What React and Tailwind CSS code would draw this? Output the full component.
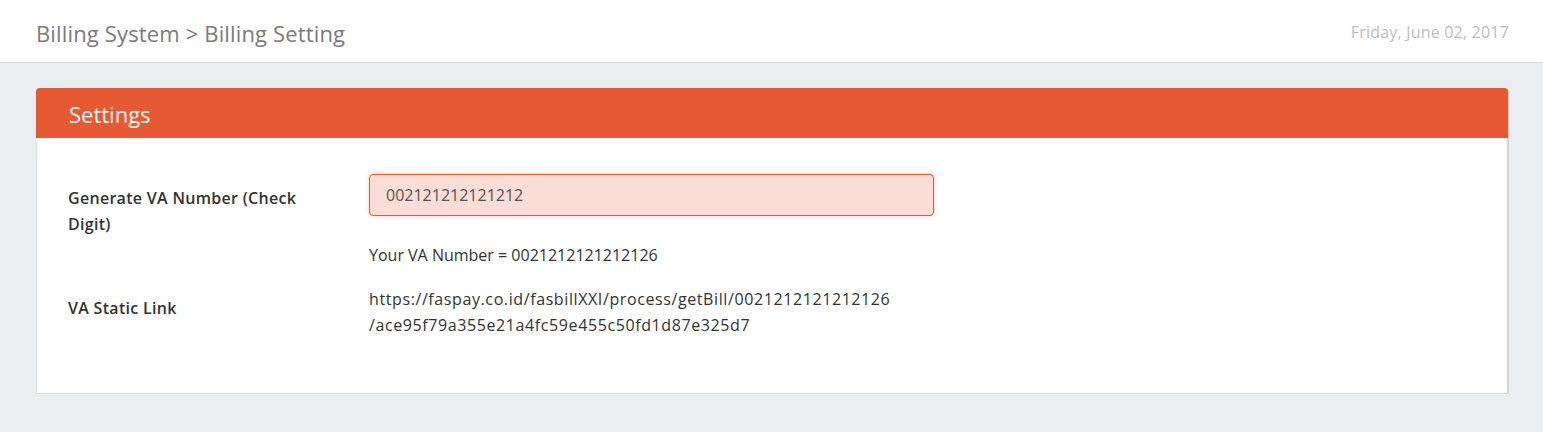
import React from "react";

function App() {
  return (
    <div className="min-h-screen bg-[#ebeef0] font-['Open_Sans',sans-serif]">
      {/* top bar */}
      <div className="h-[63px] bg-white border-b border-[#d8d8d8] flex items-center justify-between pl-[36px] pr-[34px]">
        <h1 className="text-[22px] text-[#7b7b7b] pt-[5px] tracking-[0.15px]">Billing System &gt; Billing Setting</h1>
        <span className="text-[16px] text-[#bdbdbd] tracking-[0.2px] pt-[2px]">Friday, June 02, 2017</span>
      </div>

      <div className="pl-[36px] pr-[34px] pt-[25px]">
        <div className="bg-white rounded-t-[4px] border border-[#dedede] border-r-2 border-r-[#d4d4d4]">
          <div className="h-[50px] -mx-px -mt-px bg-[#e55a32] rounded-t-[4px] flex items-center px-[33px]">
            <h2 className="text-[22px] text-white pt-[2px]">Settings</h2>
          </div>

          <div className="px-[31px] pt-[36px] pb-[55px] text-[16px] text-[#333] leading-[26px]">
            <div className="flex">
              <div className="w-[301px] shrink-0">
                <label className="block w-[245px] pt-[11px] font-semibold text-[#333] tracking-[0.3px]">
                  Generate VA Number (Check Digit)
                </label>
              </div>
              <div>
                <input
                  type="text"
                  defaultValue="002121212121212"
                  className="w-[565px] h-[42px] rounded-[4px] bg-[#f9ddd6] border border-[#e55a32] px-[16px] text-[#555] outline-none shadow-[0_0_4px_rgba(229,90,50,0.35)]"
                />
                <p className="mt-[26px]">Your VA Number = 0021212121212126</p>
              </div>
            </div>

            <div className="flex mt-[18px]">
              <label className="w-[301px] shrink-0 pt-[9px] font-semibold tracking-[0.3px]">VA Static Link</label>
              <div className="tracking-[0.6px]">
                <p>https://faspay.co.id/fasbillXXI/process/getBill/0021212121212126</p>
                <p>/ace95f79a355e21a4fc59e455c50fd1d87e325d7</p>
              </div>
            </div>
          </div>
        </div>
      </div>
    </div>
  );
}

export default App;
